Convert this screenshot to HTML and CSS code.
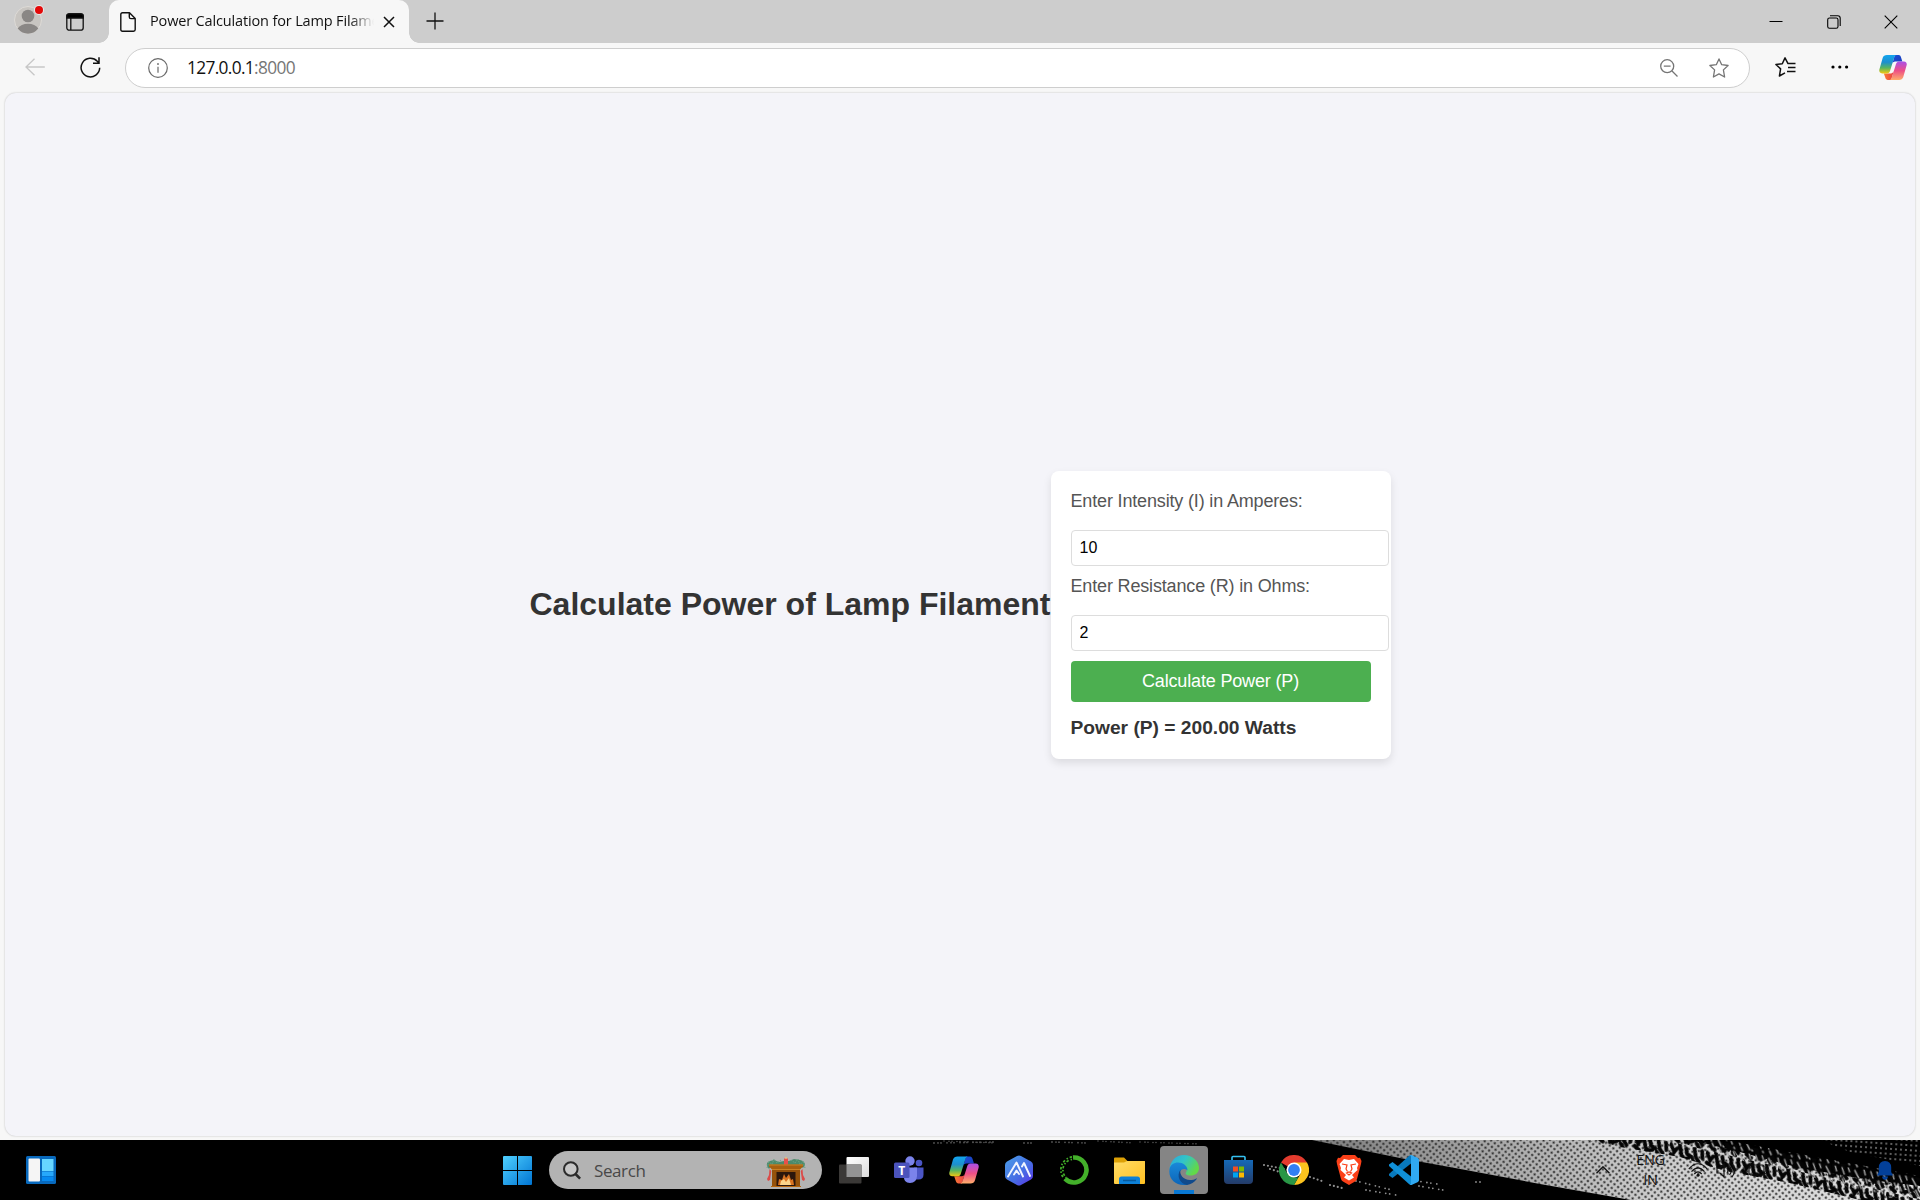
FILE: index.html
```html
<!DOCTYPE html>
<html lang="en">
<head>
<meta charset="utf-8">
<title>Power Calculation for Lamp Filament</title>
<link rel="stylesheet" href="styles.css">
</head>
<body>
<svg class="defs" width="0" height="0" aria-hidden="true">
  <defs>
    <linearGradient id="cpA" x1="0" y1="0" x2="0" y2="1"><stop offset="0" stop-color="#12a5ef"/><stop offset=".4" stop-color="#1d8fce"/><stop offset=".7" stop-color="#57b560"/><stop offset="1" stop-color="#f2c811"/></linearGradient>
    <linearGradient id="cpB" x1="0" y1="0" x2="0" y2="1"><stop offset="0" stop-color="#a94fe8"/><stop offset=".5" stop-color="#ee4f86"/><stop offset="1" stop-color="#ffae6b"/></linearGradient>
    <linearGradient id="cpC" x1="0" y1="0" x2="1" y2="1"><stop offset="0" stop-color="#1c50d8"/><stop offset="1" stop-color="#1a3cb8"/></linearGradient>
    <linearGradient id="cpD" x1="0" y1="0" x2="1" y2="0"><stop offset="0" stop-color="#fb7b34"/><stop offset="1" stop-color="#e83f45"/></linearGradient>
  </defs>
  <symbol id="copilot" viewBox="0 0 30 28">
    <path d="M17 .5h4c1.500 0 2 1 2.500 2.300L25 7.500H17.500c-2 0-3 1-3.500 3z" fill="url(#cpC)"/>
    <path d="M13 27.500H9.500c-1.500 0-2.200-1-2.700-2.400L5.200 20.300h7.300c2 0 3-1 3.600-3z" fill="url(#cpD)"/>
    <path d="M8.500 .5H19c-1.500 0-2.200 1.200-2.700 2.700l-4.500 14.500c-.6 1.800-1.600 2.600-3.300 2.600H3.300C1 20.300-.2 18.500.4 16.200L4 3.600C4.700 1.500 6.200.5 8.500.5z" fill="url(#cpA)"/>
    <path d="M21.500 27.500H11c1.500 0 2.200-1.200 2.700-2.700l4.500-14.600c.6-1.800 1.600-2.700 3.300-2.700h5.200c2.300 0 3.500 1.900 2.900 4.200L26 24.300c-.7 2.200-2.200 3.200-4.500 3.200z" fill="url(#cpB)"/>
  </symbol>
</svg>

<header class="tabbar">
  <div class="tab-tools">
    <svg class="avatar" width="32" height="32" viewBox="0 0 32 32">
      <circle cx="15" cy="17" r="13.500" fill="#c8c5c1" stroke="#dedbd7"/>
      <circle cx="15" cy="13" r="6.300" fill="#8a8785"/>
      <path d="M4.600 25.500Q8 20.800 15 20.800T25.400 25.500Q21 30.700 15 30.700T4.600 25.500z" fill="#8a8785"/>
      <circle cx="26" cy="7" r="5" fill="#e9e9e9"/><circle cx="26" cy="7" r="4" fill="#e30909"/>
    </svg>
    <svg class="workspaces" width="18" height="18" viewBox="0 0 18 18" fill="none" stroke="#111" stroke-width="1.300">
      <rect x=".8" y=".8" width="16.400" height="16.400" rx="2.500"/><path d="M.8 5V3Q.8.800 3 .8H15Q17.200.8 17.200 3V5z" fill="#000"/><path d="M4.800 5v12"/>
    </svg>
  </div>
  <div class="tab">
    <svg width="16" height="20" viewBox="0 0 16 20" fill="none" stroke="#111" stroke-width="1.400" stroke-linejoin="round"><path d="M2.500.8H9.500L15.200 6.500V17.500q0 1.700-1.700 1.700H2.500Q.8 19.200.8 17.500V2.500Q.8.800 2.500.8zM9.300.8V5q0 1.600 1.600 1.600h4.300"/></svg>
    <span class="tab-title">Power Calculation for Lamp Filament</span>
    <svg class="tab-close" width="12" height="12" viewBox="0 0 12 12" stroke="#111" stroke-width="1.500"><path d="M1 1l10 10M11 1L1 11"/></svg>
  </div>
  <svg class="new-tab" width="18" height="18" viewBox="0 0 18 18" stroke="#111" stroke-width="1.300"><path d="M9 .5v17M.5 9h17"/></svg>
  <div class="window-buttons">
    <svg width="14" height="14" viewBox="0 0 14 14"><path d="M.5 6.500h13" stroke="#000"/></svg>
    <svg width="14" height="14" viewBox="0 0 14 14" fill="none" stroke="#000" stroke-width="1.100"><rect x=".7" y="3" width="10.300" height="10.300" rx="1.800"/><path d="M3 .8h7.800q2.400 0 2.400 2.400V11"/></svg>
    <svg width="14" height="14" viewBox="0 0 14 14" stroke="#000" stroke-width="1.100"><path d="M.7.700l12.600 12.600M13.300.700L.7 13.300"/></svg>
  </div>
</header>

<nav class="toolbar">
  <svg class="back" width="20" height="18" viewBox="0 0 20 18" fill="none" stroke="#c7c7c7" stroke-width="1.300"><path d="M19.800 9H1M9.500.7L1 9l8.500 8.300"/></svg>
  <svg class="reload" width="21" height="21" viewBox="0 0 21 21" fill="none" stroke="#111" stroke-width="1.500"><path d="M19.700 10.800A9.300 9.300 0 1 1 17.300 4.300L19 6M19 .3V6.200H13"/></svg>
  <div class="address">
    <svg width="20" height="20" viewBox="0 0 20 20" fill="none" stroke="#6a6a6a" stroke-width="1.200"><circle cx="10" cy="10" r="9.300"/><path d="M10 8.800v6" /><circle cx="10" cy="6" r=".6" fill="#6a6a6a" stroke-width=".8"/></svg>
    <span class="url">127.0.0.1<span class="port">:8000</span></span>
    <svg class="zoom-out" width="18" height="18" viewBox="0 0 18 18" fill="none" stroke="#757575" stroke-width="1.300"><circle cx="7.200" cy="7.200" r="6.500"/><path d="M12 12l5.500 5.500M3.800 7.200h6.800"/></svg>
    <svg class="star" width="20" height="20" viewBox="0 0 20 20" fill="none" stroke="#757575" stroke-width="1.300" stroke-linejoin="round"><path d="M10 .9l2.700 5.800 6.400.8-4.700 4.400 1.200 7.100L10 15.900 4.400 19l1.200-7.100L.9 7.500l6.400-.8z"/></svg>
  </div>
  <svg class="favorites" width="21" height="20" viewBox="0 0 21 20" fill="none" stroke="#111" stroke-width="1.500" stroke-linejoin="round"><path d="M20.500 6.600H13L10 .9 7.300 6.700.9 7.500l4.700 4.400L4.400 19l5.600-3.100M13 10.500h7.500M12 14.500h8.500"/></svg>
  <svg class="more" width="18" height="4" viewBox="0 0 18 4"><circle cx="2" cy="2" r="1.600"/><circle cx="8.800" cy="2" r="1.600"/><circle cx="15.600" cy="2" r="1.600"/></svg>
  <svg class="copilot" width="28" height="27"><use href="#copilot"/></svg>
</nav>

<div class="viewport">
  <main class="page">
    <h1>Calculate Power of Lamp Filament</h1>
    <form class="card">
      <label for="i">Enter Intensity (I) in Amperes:</label>
      <input id="i" type="text" value="10">
      <label for="r">Enter Resistance (R) in Ohms:</label>
      <input id="r" type="text" value="2">
      <button type="button">Calculate Power (P)</button>
      <p class="result">Power (P) = 200.00 Watts</p>
    </form>
  </main>
</div>

<footer class="taskbar">
  <svg class="wallpaper" width="1920" height="60" viewBox="0 0 1920 60">
    <defs>
      <linearGradient id="shade" x1="1310" y1="0" x2="1900" y2="0" gradientUnits="userSpaceOnUse"><stop offset="0" stop-color="#7c7c7c"/><stop offset=".3" stop-color="#a6a6a6"/><stop offset=".6" stop-color="#cecece"/><stop offset="1" stop-color="#e2e2e2"/></linearGradient>
      <pattern id="holes" width="4.600" height="4.600" patternUnits="userSpaceOnUse" patternTransform="rotate(38)"><circle cx="2.300" cy="2.300" r="1.100" fill="#2a2a2a"/></pattern>
      <pattern id="streaks" width="29" height="23" patternUnits="userSpaceOnUse" patternTransform="rotate(8)"><path d="M1 1l3 6M7 0l2 4M14 2l5 7M23 0l2 5M3 12l2 4M10 9l3 7M19 13l4 6M0 9l1 1M14 18l2 3M26 9l2 4M7 19l1 1M25 19l1 1" stroke="#a8a8a8" stroke-width="1.400" fill="none" stroke-linecap="round"/></pattern>
      <pattern id="blots" width="37" height="17" patternUnits="userSpaceOnUse" patternTransform="rotate(13)"><path d="M1 2l5 7 2-4M10 1l4 10 4 3M17 3l2 5 5 2M25 1l3 8 4 4M33 2l2 7M3 12l5 3M15 14l6-2M26 13l3 3" stroke="#050505" stroke-width="3.800" fill="none" stroke-linecap="round"/></pattern>
      <pattern id="dots" width="5" height="5" patternUnits="userSpaceOnUse" patternTransform="rotate(4)"><circle cx="2" cy="2" r=".9" fill="#8b8b8b"/></pattern>
    </defs>
    <path d="M1312 0H1690L1740 12 1800 28 1870 40 1920 46V60H1631L1540 44 1455 28 1400 18z" fill="url(#shade)"/>
    <path d="M1312 0H1690L1740 12 1800 28 1870 40 1920 46V60H1631L1540 44 1455 28 1400 18z" fill="url(#holes)"/>
    <path d="M1584 0H1710L1800 16 1920 38V60H1860L1790 43 1725 31 1680 17 1620 7z" fill="url(#blots)"/>
    <path d="M1700 0H1725L1800 14 1920 36V58H1890L1800 34 1730 18z" fill="url(#streaks)"/>
    <path d="M1820 0H1920V26L1850 12z" fill="url(#dots)"/>
    <g fill="none" stroke="#8f8f8f" stroke-linecap="round">
      <path d="M934 3l60-1M1024 3h10M1052 2l36 1" stroke="#555" stroke-width="1.800" stroke-dasharray="0 4 0 3 0 6"/>
      <path d="M944 1l52 2M1098 1l36 2M1140 2l60 2" stroke="#555" stroke-width="1.600" stroke-dasharray="0 5 0 3"/>
      <path d="M1264 25l26 5M1270 29l10 3M1310 37l12 4M1330 45l12 3" stroke-width="2.200" stroke-dasharray="0 4"/>
      <path d="M1356 41l36 9M1366 50l30 5M1417 41l20 3M1419 46l24 4M1476 42h8" stroke-width="1.800" stroke-dasharray="0 4 0 6"/>
    </g>
  </svg>

  <svg class="widgets" width="30" height="28" viewBox="0 0 30 28"><rect width="30" height="28" rx="1.500" fill="#0869bd"/><rect x="2.500" y="2.500" width="11.500" height="23" rx="1" fill="#f5f5f5"/><path d="M16 3h11.500v12H16z" fill="#67d6ff"/><path d="M16 15.500h11.500v4.500H16z" fill="#27a9fb"/><path d="M16 20.500h11.500v4.500H16z" fill="#078af0"/></svg>

  <div class="launcher">
    <svg class="start" width="29" height="29" viewBox="0 0 29 29"><defs><linearGradient id="win" x1="0" y1="0" x2="1" y2="1"><stop offset="0" stop-color="#4fd0ff"/><stop offset="1" stop-color="#0074d2"/></linearGradient></defs><path d="M1 0H14V14H0V1Q0 0 1 0zM15 0H28Q29 0 29 1V14H15zM0 15H14V29H1Q0 29 0 28zM15 15H29V28Q29 29 28 29H15z" fill="url(#win)"/></svg>

    <div class="search">
      <svg width="18" height="19" viewBox="0 0 18 19" fill="none" stroke="#2b2b2b" stroke-width="2"><circle cx="7.800" cy="8" r="6.800" fill="#c6c6c6"/><path d="M12.500 13l4.600 4.600" stroke-width="2.600"/></svg>
      <span>Search</span>
      <svg class="fireplace" width="40" height="30" viewBox="0 0 40 30">
        <path d="M1 9Q0 5 4 4l4-1 5 2 5-1h5l5-2 6 1q5 1 5 5l-2 3-3-3H6l-3 4z" fill="#4c8a6b"/>
        <path d="M1 11l2-7 3 4 2-6 3 4 4-3M39 11l-2-7-3 4-2-6-3 4-4-3" stroke="#6aa286" fill="none" stroke-dasharray="1.500 1"/>
        <rect x="18" y="1.500" width="4" height="6.500" fill="#e8504a"/><path d="M20 0v2" stroke="#ffc65a"/>
        <path d="M3 7.500h34v2l-3 3H6l-3-3z" fill="#a9600f"/><path d="M6 12h28v18H6z" fill="#95520b"/><path d="M3 8h34M6 12.500h28" stroke="#cc8226"/>
        <path d="M10.500 15h19v14h-19z" fill="#2c170c"/><path d="M12 28l1-6 3 1 2-6 2 4 3-4 2 6 2-1 1 6z" fill="#d97422"/><path d="M14 28l1-4 3-2 2 3 3-4 2 7z" fill="#fbd48a"/><path d="M5 29.500h30" stroke="#b8660d"/>
        <path d="M3.500 12l1.800 2-1.300 9-2 1-1-2 2-4zM36.500 12l-1.800 2 1.300 9 2 1 1-2-2-4z" fill="#dc4a48"/>
      </svg>
    </div>

    <div class="apps">
      <span class="app"><svg width="30" height="28" viewBox="0 0 30 28"><defs><linearGradient id="tvBack" x1="0" y1="0" x2="1" y2="1"><stop offset="0" stop-color="#fff"/><stop offset="1" stop-color="#dcdcdc"/></linearGradient></defs><rect x="7.500" y="1" width="22.500" height="20" rx="1" fill="url(#tvBack)"/><rect x="0" y="8.500" width="22.500" height="19" rx="1" fill="#3b3937"/><path d="M7.500 8.500h15V21h-15z" fill="#949494"/></svg></span>
      <span class="app"><svg width="30" height="28" viewBox="0 0 30 28"><circle cx="25" cy="7" r="3.300" fill="#4b55c5"/><path d="M20 11.500h9.500v7q0 5-5 5H20z" fill="#4b55c5"/><circle cx="16" cy="5" r="4.700" fill="#7b83eb"/><path d="M10 11.500h13V20q-.4 7-7 7t-6-7z" fill="#7b83eb"/><rect y="6.500" width="15.500" height="15.500" rx="1.500" fill="#4b53bc"/><text class="teams-letter" x="7.700" y="18.500" text-anchor="middle">T</text></svg></span>
      <span class="app"><svg width="30" height="28"><use href="#copilot"/></svg></span>
      <span class="app"><svg width="30" height="31" viewBox="0 0 30 31"><defs><linearGradient id="hex" x1="0" y1="0" x2="1" y2="1"><stop offset="0" stop-color="#4a9fe8"/><stop offset=".6" stop-color="#476be4"/><stop offset="1" stop-color="#5a2ee5"/></linearGradient></defs><path d="M13 1q2-1 4 0l10 5.500q2 1 2 3.500v11q0 2.500-2 3.500L17 30q-2 1-4 0L3 24.500Q1 23.500 1 21V10Q1 7.500 3 6.500z" fill="url(#hex)"/><path d="M4 21.500l8.500-14 6.500 14M10 19.500l2.500-4L15 19M18 11.500l2-3.500 6 13" stroke="#f2f5ff" stroke-width="1.900" fill="none" stroke-linecap="round" stroke-linejoin="round"/></svg></span>
      <span class="app"><svg width="30" height="30" viewBox="0 0 30 30" fill="none" stroke="#43b02a"><path d="M14 2.500A12.500 12.500 0 1 1 6 23.700" stroke-width="4.600"/><path d="M13 1.800A13.300 13.300 0 0 0 5 23.500" stroke-width="1.700" stroke-dasharray="2.500 1.800 1.500 2"/><path d="M13 4.300A10.800 10.800 0 0 0 7 22.500" stroke-width="1.700" stroke-dasharray="1.500 2 2.500 1.500"/></svg></span>
      <span class="app"><svg width="31" height="27" viewBox="0 0 31 27"><defs><linearGradient id="fold" x1="0" y1="0" x2="1" y2="1"><stop offset="0" stop-color="#ffdc67"/><stop offset="1" stop-color="#ffc021"/></linearGradient></defs><path d="M0 1.500Q0 .5 1 .5H10l3.500 3.500H31V10H0z" fill="#dda106"/><path d="M0 5.500H10L13 4H30q1 0 1 1V26q0 1-1 1H1q-1 0-1-1z" fill="url(#fold)"/><path d="M5 27V22q0-2.500 2.500-2.500h16Q26 19.500 26 22v5z" fill="#0d80d8"/><path d="M9 23.500h13" stroke="#075a9e" stroke-width="1.500"/></svg></span>
      <span class="app active"><svg width="30" height="30" viewBox="0 0 30 30"><defs><linearGradient id="eTop" x1="0" y1="0" x2="1" y2=".5"><stop offset="0" stop-color="#2aa8df"/><stop offset=".5" stop-color="#32c4c8"/><stop offset="1" stop-color="#62d948"/></linearGradient><linearGradient id="eMid" x1="0" y1="0" x2="0" y2="1"><stop offset="0" stop-color="#1989d9"/><stop offset="1" stop-color="#0d65b8"/></linearGradient></defs><path d="M.5 14.500C1 6 7 0 15 0s15 6 15 13c0 5-4 7.500-8.500 7.500-4 0-5.500-1.500-4.500-3 1.500-2 .8-6-3.200-7.600C8 8 2 9.500.5 14.500z" fill="url(#eTop)"/><path d="M.5 14.500C1 9.800 5 7.500 9 7.500c5 0 9.500 3.500 9.500 8-2-2.500-7-2-7.600 2C10.500 22 14 27 19 29.400 8 32-1 24.500.5 14.500z" fill="url(#eMid)"/><path d="M11.500 14.500c-1.500 5 3 10.500 9.500 10.500 2.500 0 4.600-.6 6.200-1.600.5-.2.800.2.500.7C25.500 27.500 22 29.500 18 30c-7-1-11-9-6.500-15.500z" fill="#114a8b"/></svg></span>
      <span class="app store"><svg width="29" height="30" viewBox="0 0 29 30"><defs><linearGradient id="store" x1="0" y1="0" x2="0" y2="1"><stop offset="0" stop-color="#1569b7"/><stop offset="1" stop-color="#243b68"/></linearGradient></defs><path d="M8 7V2.500Q8 1.500 9 1.500H20q1 0 1 1V7" fill="none" stroke="#35c1f1" stroke-width="1.600"/><path d="M0 5H29V25q0 4-4 4H4q-4 0-4-4z" fill="url(#store)"/><path d="M9 11.500h5v5H9z" fill="#f25022"/><path d="M15 11.500h5v5h-5z" fill="#7fba00"/><path d="M9 17.500h5v5H9z" fill="#00a4ef"/><path d="M15 17.500h5v5h-5z" fill="#ffb900"/></svg></span>
      <span class="app"><svg width="30" height="30" viewBox="0 0 30 30"><path d="M15 15L2 7.500A15 15 0 0 1 28 7.500z" fill="#e33b2e"/><path d="M15 7.500H28A15 15 0 0 1 15 30L21.500 18.700z" fill="#fcc31e"/><path d="M2 7.500L8.500 18.700 15 22.500h4.300L15 30A15 15 0 0 1 2 7.500z" fill="#299646"/><circle cx="15" cy="15" r="7.500" fill="#fff"/><circle cx="15" cy="15" r="5.900" fill="#317ff3"/></svg></span>
      <span class="app"><svg width="26" height="30" viewBox="0 0 26 30"><path d="M7 0H19l3 3 2-.3L25.500 6l-.5 3-4 15q-.5 1.500-2 2.500L13 30 7 26.500Q5.500 25.500 5 24L1 9 .5 6 2 2.700 4 3z" fill="#fb4018"/><path d="M8 4l5 1 5-1 4.500 5-1.500 4 .5 2-5.500 5 2 2.500L13 25.500 8 22.500 10 20 4.500 15l.5-2L3.500 9z" fill="#fff"/><path d="M6 9l5 1-1 4 1.500 2.500M20 9l-5 1 1 4-1.500 2.500M10.500 18L13 17l2.500 1L13 20z" fill="none" stroke="#fb4018" stroke-width="1.200"/></svg></span>
      <span class="app"><svg width="30" height="30" viewBox="0 0 30 30"><path d="M22 0v8.500L3.500 23 0 20.500V19L20.500.5z" fill="#0879bd"/><path d="M22 30v-8.500L3.500 7 0 9.500V11L20.500 29.500z" fill="#1090d8"/><path d="M21 .3Q22-.3 23 .2l6 2.800 1 1.500v21L29 27l-6 2.800q-1 .5-2-.1l1-1.200v-27z" fill="#30a9f2"/></svg></span>
    </div>
  </div>

  <div class="tray">
    <svg class="chevron" width="14" height="8" viewBox="0 0 14 8" fill="none" stroke="#111" stroke-width="1.400"><path d="M.5 7.300L7 .8l6.500 6.500"/></svg>
    <div class="lang"><span>ENG</span><span>IN</span></div>
    <svg class="wifi" width="20" height="14" viewBox="0 0 20 14" fill="none" stroke="#111" stroke-width="1.200"><path d="M.8 6Q10-4.500 19.200 6M3.500 8.600Q10 1 16.500 8.600M6.300 11Q10 6.700 13.700 11"/><circle cx="10" cy="12.200" r="1.500" fill="#111" stroke="none"/></svg>
    <svg class="sound" width="20" height="15" viewBox="0 0 20 15" fill="none" stroke="#111" stroke-width="1.200"><path d="M1 5h3l4-4v13L4 10H1zM11 5q2 2.500 0 5M13.500 3q3.500 4.500 0 9M16 1q5 6.500 0 13"/></svg>
    <svg class="battery" width="20" height="12" viewBox="0 0 20 12" fill="none" stroke="#111" stroke-width="1.200"><rect x="1" y="1" width="15" height="10" rx="2"/><path d="M18 4v4"/></svg>
    <svg class="bell" width="16" height="19" viewBox="0 0 16 19"><path d="M8 0q6 0 6.200 6.500V11l1.800 3.500H0L1.800 11V6.500Q2 0 8 0zM5 15.500h6Q10.500 18.700 8 18.700T5 15.500z" fill="#034099"/></svg>
  </div>
</footer>
</body>
</html>
```
FILE: styles.css
```css
* { box-sizing: border-box; }
body {
  margin: 0;
  width: 1920px;
  height: 1200px;
  display: flex;
  flex-direction: column;
  overflow: hidden;
  background: #f7f7f7;
  font-family: "Open Sans", "Noto Sans", sans-serif;
}
svg { display: block; flex: none; }
.defs { position: absolute; }

.tabbar { height: 43px; flex: none; display: flex; align-items: center; background: #cdcdcd; }
.tab-tools { width: 109px; height: 43px; padding-left: 13px; display: flex; align-items: center; gap: 21px; background: #cdcdcd; }
.avatar { margin-top: -5px; }
.tab {
  width: 300px;
  height: 43px;
  padding: 0 14px 0 11px;
  display: flex;
  align-items: center;
  background: #f7f7f7;
  border-radius: 10px 10px 0 0;
  position: relative;
}
.tab::before, .tab::after { content: ""; position: absolute; bottom: 0; width: 10px; height: 10px; }
.tab::before { left: -10px; background: radial-gradient(circle at 0 0, #cdcdcd 9.5px, #f7f7f7 10px); }
.tab::after { right: -10px; background: radial-gradient(circle at 100% 0, #cdcdcd 9.5px, #f7f7f7 10px); }
.tab-title {
  width: 224px;
  margin: -3px 0 0 14px;
  flex: none;
  overflow: hidden;
  white-space: nowrap;
  font-size: 14.5px;
  letter-spacing: -0.15px;
  color: #111;
  -webkit-mask-image: linear-gradient(to right, #000 200px, transparent 224px);
  mask-image: linear-gradient(to right, #000 200px, transparent 224px);
}
.tab-close { margin-left: auto; }
.new-tab { margin: -1px 0 0 17px; }
.window-buttons { margin-left: auto; padding-right: 22px; display: flex; gap: 43.5px; }

.toolbar { height: 50px; flex: none; padding: 0 13px 2px 25px; display: flex; align-items: center; }
.reload { margin-left: 35px; }
.address {
  width: 1625px;
  height: 40px;
  margin: 2px 0 0 24px;
  padding: 0 20px 0 22px;
  flex: none;
  display: flex;
  align-items: center;
  background: #fff;
  border: 1px solid #cecece;
  border-radius: 20px;
}
.url { margin: -2px 0 0 19px; font-size: 17.3px; letter-spacing: -0.65px; color: #111; }
.port { color: #767676; }
.zoom-out { margin-left: auto; }
.star { margin-left: 31px; }
.favorites { margin-left: 25px; }
.more { margin-left: 35px; }
.copilot { margin-left: auto; }

.viewport { height: 1047px; flex: none; padding: 0 5px 4px; display: flex; }
.page {
  flex: 1;
  display: flex;
  align-items: center;
  justify-content: center;
  background: #f4f4f9;
  border-radius: 11px;
  box-shadow: 0 0 2px #b8b8b8;
  font-family: "Liberation Sans", Arial, sans-serif;
}
h1 { margin: -20px 0 0; font-size: 32px; line-height: 37px; color: #333; white-space: nowrap; }
.card {
  width: 340px;
  height: 288px;
  padding: 20px;
  display: flex;
  flex-direction: column;
  background: #fff;
  border-radius: 8px;
  box-shadow: 0 4px 8px rgba(0, 0, 0, 0.1);
}
.card label { height: 21px; line-height: 21px; margin-bottom: 18px; font-size: 18px; letter-spacing: -0.16px; color: #555; }
.card input {
  width: 318px;
  height: 36px;
  margin: 0 0 10px;
  padding: 8px;
  border: 1px solid #ddd;
  border-radius: 4px;
  font: 16px "Liberation Sans", Arial, sans-serif;
  color: #000;
}
.card button {
  height: 41px;
  padding: 0;
  border: 0;
  border-radius: 4px;
  background: #4caf50;
  color: #fff;
  font: 18px "Liberation Sans", Arial, sans-serif;
  letter-spacing: -0.16px;
}
.result { margin: 15px 0 0; font-size: 19.2px; line-height: 21px; font-weight: bold; color: #333; }

.taskbar { height: 60px; flex: none; display: flex; align-items: center; position: relative; background: #000; }
.wallpaper { position: absolute; inset: 0; }
.widgets { margin-left: 26px; }
.launcher { margin-left: 447px; display: flex; align-items: center; position: relative; }
.search {
  width: 273px;
  height: 38px;
  margin-left: 17px;
  padding: 0 16px 0 14px;
  display: flex;
  align-items: center;
  border-radius: 19px;
  background: #b3b3b3;
  color: #484848;
  font-size: 17px;
}
.search span { margin: 0 0 0 13px; letter-spacing: -0.4px; }
.fireplace { margin: 3px 0 0 auto; }
.apps { margin-left: 4.5px; display: grid; grid-template-columns: repeat(11, 55px); }
.app { height: 48px; display: flex; align-items: center; justify-content: center; }
.active { width: 48px; justify-self: center; border-radius: 4px; background: linear-gradient(#0878d4, #0878d4) center bottom / 20px 4px no-repeat #858585; }
.store { padding-right: 2px; }
.teams-letter { font: bold 12px "Open Sans", sans-serif; fill: #fff; }
.tray { position: relative; margin-left: 164px; display: flex; align-items: center; }
.lang { width: 40px; margin-left: 21px; display: flex; flex-direction: column; align-items: center; font-size: 14.5px; line-height: 20px; color: #111; letter-spacing: -0.3px; }
.wifi { margin-left: 17px; }
.sound { margin-left: 8px; }
.battery { margin-left: 12px; }
.bell { margin-left: 109px; }
```
